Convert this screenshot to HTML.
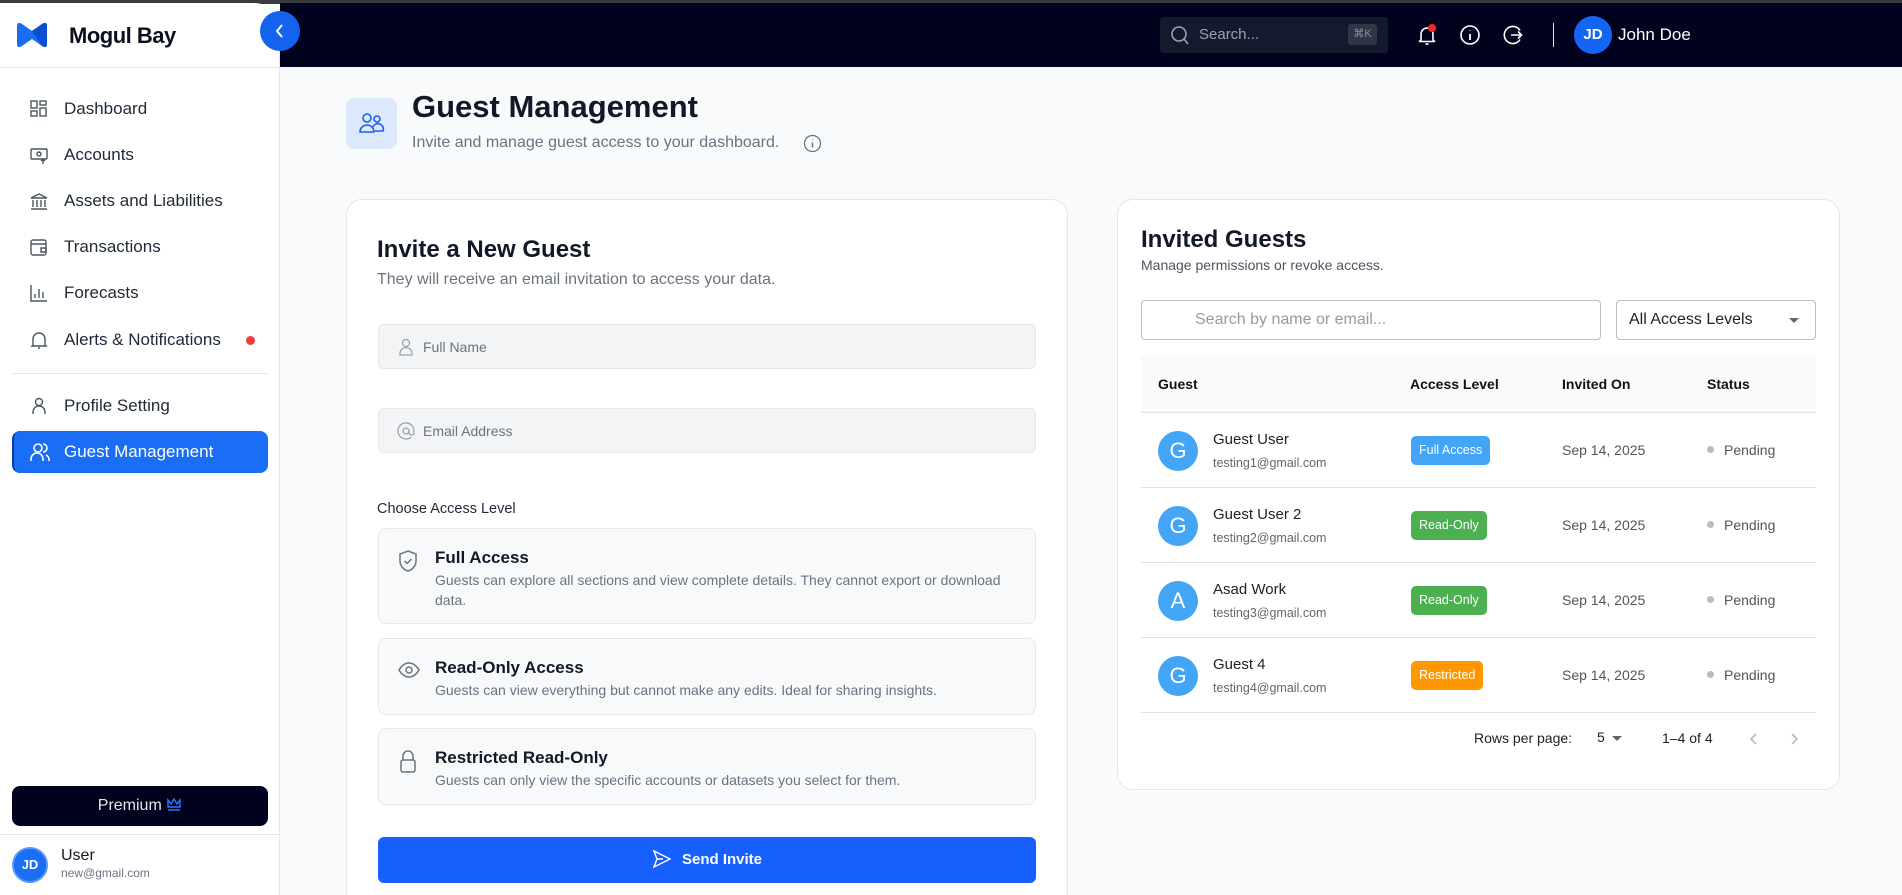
<!DOCTYPE html>
<html style="width:1902px;height:895px;overflow:hidden"><head><meta charset="utf-8"><style>
*{box-sizing:border-box;margin:0;padding:0}
body{width:1902px;height:895px;overflow:hidden;background:#f8fafc;font-family:"Liberation Sans",sans-serif;position:relative;color:#111827}
.abs{position:absolute}
.topstrip{left:0;top:0;width:1902px;height:4px;background:#3b3b3f}
.topbar{left:280px;top:3px;width:1622px;height:64px;background:#01021d}
.sidebar{left:0;top:3px;width:280px;height:892px;background:#fff;border-right:1px solid #e5e7eb;border-top-right-radius:26px}
.nav{position:absolute;left:0;width:280px;height:40px;display:flex;align-items:center;font-size:17px;color:#1f2937}
.nav svg{position:absolute;left:29px}
.nav span{position:absolute;left:64px}
.card{background:#fff;border:1px solid #e5e7eb;border-radius:16px}
.input{position:absolute;left:378px;width:658px;height:45px;background:#f3f4f6;border:1px solid #e5e7eb;border-radius:6px;font-size:14px;color:#6b7280}
.input svg{position:absolute;left:18px;top:13px}
.input span{position:absolute;left:44px;top:14px}
.opt{position:absolute;left:378px;width:658px;background:#f8f9fb;border:1px solid #e5e7eb;border-radius:8px}
.opt svg{position:absolute;left:18px}
.opt b{position:absolute;left:56px;font-size:17px;font-weight:600;color:#111827}
.opt p{position:absolute;left:56px;right:14px;font-size:14px;line-height:20px;color:#6b7280}
.th{position:absolute;top:376px;font-size:14px;font-weight:bold;color:#111}
.row{position:absolute;left:1141px;width:675px;height:75px;border-bottom:1px solid #e0e0e0}
.av{position:absolute;left:17px;top:18px;width:40px;height:40px;border-radius:50%;background:#42a5f5;color:#fff;font-size:22px;text-align:center;line-height:40px}
.nm{position:absolute;left:72px;top:18px;font-size:15px;color:#222}
.em{position:absolute;left:72px;top:43px;font-size:12.5px;color:#666}
.badge{position:absolute;left:270px;top:23px;height:29px;border-radius:5px;color:#fff;font-size:12.5px;line-height:29px;padding:0 8px}
.dt{position:absolute;left:421px;top:29px;font-size:14px;color:#555}
.st{position:absolute;left:566px;top:29px;font-size:14px;color:#555}
.st:before{content:"";display:inline-block;width:7px;height:7px;border-radius:50%;background:#bbb;margin-right:10px;vertical-align:2px}
</style></head><body>
<div class="abs topstrip"></div>
<div class="abs topbar"></div>
<div class="abs" style="left:1160px;top:17px;width:228px;height:36px;background:#131a2e;border-radius:3px"></div>
<svg class="abs" style="left:1170px;top:25px" width="20" height="22" viewBox="0 0 20 22"><circle cx="9" cy="9" r="7" fill="none" stroke="#9ca3af" stroke-width="1.6"/><path d="M14 14l4 5" stroke="#9ca3af" stroke-width="1.6"/></svg>
<div class="abs" style="left:1199px;top:26px;font-size:15px;color:#9ca3af">Search...</div>
<div class="abs" style="left:1348px;top:24px;width:29px;height:21px;background:#2f3646;border-radius:3px;font-size:11px;color:#8b93a3;text-align:center;line-height:21px">⌘K</div>
<svg class="abs" style="left:1415px;top:23px" width="24" height="24" viewBox="0 0 24 24"><path d="M6 17V11a6 6 0 0 1 12 0v6l1.5 1.5h-15z" fill="none" stroke="#fff" stroke-width="1.6" stroke-linejoin="round"/><path d="M10.5 21h3" stroke="#fff" stroke-width="1.6"/><circle cx="17" cy="5" r="4" fill="#ef2a2a"/></svg>
<svg class="abs" style="left:1459px;top:24px" width="22" height="22" viewBox="0 0 22 22"><circle cx="11" cy="11" r="9" fill="none" stroke="#fff" stroke-width="1.6"/><path d="M11 10v6M11 6.5v.5" stroke="#fff" stroke-width="1.8"/></svg>
<svg class="abs" style="left:1503px;top:24px" width="22" height="22" viewBox="0 0 22 22"><path d="M17 6.5A8.5 8.5 0 1 0 17 15.5" fill="none" stroke="#fff" stroke-width="1.6"/><path d="M8 11h11M15 7.5l3.5 3.5-3.5 3.5" fill="none" stroke="#fff" stroke-width="1.6"/></svg>
<div class="abs" style="left:1553px;top:23px;width:1px;height:24px;background:#e5e7eb"></div>
<div class="abs" style="left:1574px;top:16px;width:38px;height:38px;border-radius:50%;background:#1565f5;color:#fff;font-weight:bold;font-size:15px;text-align:center;line-height:38px">JD</div>
<div class="abs" style="left:1618px;top:25px;font-size:17px;color:#fff">John Doe</div>

<div class="abs sidebar"></div>
<svg class="abs" style="left:15px;top:21px" width="35" height="28" viewBox="0 0 35 28"><path d="M2 5q0-5 5-2l10 7 10-7q5-3 5 2v18q0 5-5 2l-10-7-10 7q-5 3-5-2z" fill="#1a6cf0"/><path d="M17 10l10-7q5-3 5 2v18q0 5-5 2z" fill="#0b4fcf"/></svg>
<div class="abs" style="left:69px;top:23px;font-size:22px;font-weight:bold;color:#0b1020;letter-spacing:-0.5px">Mogul Bay</div>
<div class="abs" style="left:260px;top:11px;width:40px;height:40px;border-radius:50%;background:#1463ef"></div>
<svg class="abs" style="left:273px;top:22px" width="14" height="18" viewBox="0 0 14 18"><path d="M9 3L4 9l5 6" fill="none" stroke="#fff" stroke-width="2"/></svg>
<div class="abs" style="left:0;top:67px;width:280px;height:1px;background:#e5e7eb"></div>

<div class="nav" style="top:89px"><svg width="20" height="20" viewBox="0 0 20 20" fill="none" stroke="#4b5563" stroke-width="1.4"><rect x="2" y="2" width="6" height="7"/><rect x="11" y="2" width="6" height="4"/><rect x="2" y="12" width="6" height="5"/><rect x="11" y="9" width="6" height="8"/></svg><span>Dashboard</span></div>
<div class="nav" style="top:135px"><svg width="20" height="20" viewBox="0 0 20 20" fill="none" stroke="#4b5563" stroke-width="1.4"><rect x="2" y="4" width="16" height="10" rx="1"/><circle cx="10" cy="9" r="2"/><path d="M14 19v-5M12 16l2-2 2 2"/></svg><span>Accounts</span></div>
<div class="nav" style="top:181px"><svg width="20" height="20" viewBox="0 0 20 20" fill="none" stroke="#4b5563" stroke-width="1.4"><path d="M2 7l8-4 8 4zM4 9v7M8 9v7M12 9v7M16 9v7M2 18h16"/></svg><span>Assets and Liabilities</span></div>
<div class="nav" style="top:227px"><svg width="20" height="20" viewBox="0 0 20 20" fill="none" stroke="#4b5563" stroke-width="1.4"><rect x="2" y="3" width="15" height="15" rx="2"/><path d="M2 7h15M12 11h5v4h-5z"/></svg><span>Transactions</span></div>
<div class="nav" style="top:273px"><svg width="20" height="20" viewBox="0 0 20 20" fill="none" stroke="#4b5563" stroke-width="1.4"><path d="M2 2v16h16M6 15v-4M10 15V6M14 15v-6"/></svg><span>Forecasts</span></div>
<div class="nav" style="top:320px"><svg width="20" height="20" viewBox="0 0 20 20" fill="none" stroke="#4b5563" stroke-width="1.4"><path d="M4 15V9a6 6 0 0 1 12 0v6l1 1H3zM9 18h2"/></svg><span>Alerts &amp; Notifications</span><i style="position:absolute;left:246px;width:9px;height:9px;border-radius:50%;background:#ef3b3b"></i></div>
<div class="abs" style="left:12px;top:373px;width:256px;height:1px;background:#e5e7eb"></div>
<div class="nav" style="top:386px"><svg width="20" height="20" viewBox="0 0 20 20" fill="none" stroke="#4b5563" stroke-width="1.4"><circle cx="10" cy="6" r="3.5"/><path d="M4 18v-2a6 6 0 0 1 12 0v2"/></svg><span>Profile Setting</span></div>
<div class="abs" style="left:12px;top:431px;width:256px;height:42px;background:#1a6ef5;border-radius:8px;border-left:2px solid #0b3a9a"></div>
<div class="nav" style="top:432px;color:#fff"><svg width="22" height="22" viewBox="0 0 22 22" fill="none" stroke="#fff" stroke-width="1.6"><circle cx="9" cy="7" r="4"/><path d="M2 20v-2a6 6 0 0 1 12 0v2M14 3a4 4 0 0 1 0 8M17 14a5 5 0 0 1 3 5v1"/></svg><span>Guest Management</span></div>

<div class="abs" style="left:12px;top:786px;width:256px;height:40px;background:#01021d;border-radius:8px;color:#e5e7eb;font-size:16px;text-align:center;line-height:40px">Premium <svg width="16" height="14" viewBox="0 0 16 14" style="vertical-align:-1px"><path d="M2 3l3 4 3-5 3 5 3-4v7H2zM2 13h12" fill="none" stroke="#2b7bff" stroke-width="1.4"/></svg></div>
<div class="abs" style="left:0;top:834px;width:280px;height:1px;background:#e5e7eb"></div>
<div class="abs" style="left:12px;top:847px;width:36px;height:36px;border-radius:50%;background:#1a6ef5;border:2px solid #5a97f7;color:#fff;font-weight:bold;font-size:13px;text-align:center;line-height:32px">JD</div>
<div class="abs" style="left:61px;top:847px;font-size:16px;color:#111827">User</div>
<div class="abs" style="left:61px;top:866px;font-size:12px;color:#6b7280">new@gmail.com</div>

<div class="abs" style="left:346px;top:98px;width:51px;height:51px;background:#dce9fd;border-radius:8px"></div>
<svg class="abs" style="left:358px;top:110px" width="28" height="28" viewBox="0 0 28 28" fill="none" stroke="#1a5ee8" stroke-width="1.6"><circle cx="9" cy="8" r="4"/><circle cx="19" cy="9" r="3"/><path d="M2 22a7 7 0 0 1 14 0zM15 17a5 5 0 0 1 10 4h-8"/></svg>
<div class="abs" style="left:412px;top:89px;font-size:31px;font-weight:bold;color:#111827">Guest Management</div>
<div class="abs" style="left:412px;top:134px;font-size:16px;color:#6b7280">Invite and manage guest access to your dashboard.</div>
<svg class="abs" style="left:803px;top:134px" width="19" height="19" viewBox="0 0 19 19"><circle cx="9.5" cy="9.5" r="8" fill="none" stroke="#6b7280" stroke-width="1.3"/><path d="M9.5 8.5v5M9.5 5.5v.6" stroke="#6b7280" stroke-width="1.5"/></svg>

<div class="abs card" style="left:346px;top:199px;width:722px;height:720px"></div>
<div class="abs" style="left:377px;top:236px;font-size:24px;font-weight:bold;color:#111827">Invite a New Guest</div>
<div class="abs" style="left:377px;top:271px;font-size:16px;color:#6b7280">They will receive an email invitation to access your data.</div>
<div class="input" style="top:324px"><svg width="18" height="18" viewBox="0 0 18 18" fill="none" stroke="#9ca3af" stroke-width="1.3"><circle cx="9" cy="5" r="3.5"/><path d="M3 17v-1.5a6 6 0 0 1 12 0V17z"/></svg><span>Full Name</span></div>
<div class="input" style="top:408px"><svg width="18" height="18" viewBox="0 0 18 18" fill="none" stroke="#9ca3af" stroke-width="1.3"><circle cx="9" cy="9" r="3"/><path d="M12 9v1.5a2.5 2.5 0 0 0 5 0V9a8 8 0 1 0-3 6.2"/></svg><span>Email Address</span></div>
<div class="abs" style="left:377px;top:501px;font-size:14.5px;color:#1f2937">Choose Access Level</div>
<div class="opt" style="top:528px;height:96px"><svg style="top:20px" width="22" height="24" viewBox="0 0 22 24" fill="none" stroke="#6b7280" stroke-width="1.5"><path d="M11 2l8 3v7c0 5-4 9-8 10-4-1-8-5-8-10V5z"/><path d="M7.5 12l2.5 2.5 4.5-4.5"/></svg><b style="top:19px">Full Access</b><p style="top:41px;right:16px">Guests can explore all sections and view complete details. They cannot export or download data.</p></div>
<div class="opt" style="top:638px;height:77px"><svg style="top:21px" width="24" height="20" viewBox="0 0 24 20" fill="none" stroke="#6b7280" stroke-width="1.5"><path d="M2 10c3-5 6.5-7 10-7s7 2 10 7c-3 5-6.5 7-10 7s-7-2-10-7z"/><circle cx="12" cy="10" r="3"/></svg><b style="top:19px">Read-Only Access</b><p style="top:41px">Guests can view everything but cannot make any edits. Ideal for sharing insights.</p></div>
<div class="opt" style="top:728px;height:77px"><svg style="top:20px" width="22" height="26" viewBox="0 0 22 26" fill="none" stroke="#6b7280" stroke-width="1.5"><path d="M6 11V7a5 5 0 0 1 10 0v4"/><rect x="4" y="11" width="14" height="12" rx="2"/></svg><b style="top:19px">Restricted Read-Only</b><p style="top:41px">Guests can only view the specific accounts or datasets you select for them.</p></div>
<div class="abs" style="left:378px;top:837px;width:658px;height:46px;background:#1760fd;border-radius:6px;color:#fff;font-size:15px;font-weight:600;text-align:center;line-height:46px"><svg width="20" height="20" viewBox="0 0 20 20" style="vertical-align:-5px;margin-right:10px" fill="none" stroke="#fff" stroke-width="1.4"><path d="M2 2l16 8-16 8 3-8zM5 10h6"/></svg>Send Invite</div>

<div class="abs card" style="left:1117px;top:199px;width:723px;height:591px"></div>
<div class="abs" style="left:1141px;top:226px;font-size:24px;font-weight:bold;color:#111827">Invited Guests</div>
<div class="abs" style="left:1141px;top:257px;font-size:14px;color:#4b5563">Manage permissions or revoke access.</div>
<div class="abs" style="left:1141px;top:300px;width:460px;height:40px;border:1px solid #bdbdbd;border-radius:4px;background:#fff"></div>
<div class="abs" style="left:1195px;top:311px;font-size:16px;color:#9a9a9a">Search by name or email...</div>
<div class="abs" style="left:1616px;top:300px;width:200px;height:40px;border:1px solid #bdbdbd;border-radius:4px;background:#fff"></div>
<div class="abs" style="left:1629px;top:311px;font-size:16px;color:#222">All Access Levels</div>
<div class="abs" style="left:1789px;top:318px;width:0;height:0;border-left:5px solid transparent;border-right:5px solid transparent;border-top:5px solid #666"></div>
<div class="abs" style="left:1141px;top:356px;width:675px;height:57px;background:#fafafa;border-bottom:1px solid #e0e0e0"></div>
<div class="th" style="left:1158px">Guest</div>
<div class="th" style="left:1410px">Access Level</div>
<div class="th" style="left:1562px">Invited On</div>
<div class="th" style="left:1707px">Status</div>

<div class="row" style="top:413px"><div class="av">G</div><div class="nm">Guest User</div><div class="em">testing1@gmail.com</div><div class="badge" style="background:#42a5f5">Full Access</div><div class="dt">Sep 14, 2025</div><div class="st">Pending</div></div>
<div class="row" style="top:488px"><div class="av">G</div><div class="nm">Guest User 2</div><div class="em">testing2@gmail.com</div><div class="badge" style="background:#4caf50">Read-Only</div><div class="dt">Sep 14, 2025</div><div class="st">Pending</div></div>
<div class="row" style="top:563px"><div class="av">A</div><div class="nm">Asad Work</div><div class="em">testing3@gmail.com</div><div class="badge" style="background:#4caf50">Read-Only</div><div class="dt">Sep 14, 2025</div><div class="st">Pending</div></div>
<div class="row" style="top:638px"><div class="av">G</div><div class="nm">Guest 4</div><div class="em">testing4@gmail.com</div><div class="badge" style="background:#ff9800">Restricted</div><div class="dt">Sep 14, 2025</div><div class="st">Pending</div></div>

<div class="abs" style="left:1474px;top:730px;font-size:14px;color:#222">Rows per page:</div>
<div class="abs" style="left:1597px;top:729px;font-size:14px;color:#222">5</div>
<div class="abs" style="left:1612px;top:736px;width:0;height:0;border-left:5px solid transparent;border-right:5px solid transparent;border-top:5px solid #666"></div>
<div class="abs" style="left:1662px;top:730px;font-size:14px;color:#222">1–4 of 4</div>
<svg class="abs" style="left:1747px;top:730px" width="14" height="18" viewBox="0 0 14 18"><path d="M9 4L4 9l5 5" fill="none" stroke="#bbb" stroke-width="1.6"/></svg>
<svg class="abs" style="left:1787px;top:730px" width="14" height="18" viewBox="0 0 14 18"><path d="M5 4l5 5-5 5" fill="none" stroke="#bbb" stroke-width="1.6"/></svg>
</body></html>
